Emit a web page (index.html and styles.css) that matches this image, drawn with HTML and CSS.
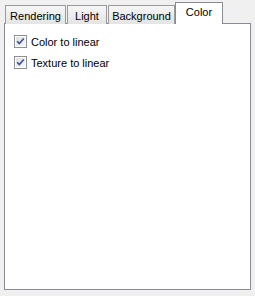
FILE: index.html
```html
<!DOCTYPE html>
<html>
<head>
<meta charset="utf-8">
<link rel="stylesheet" href="styles.css">
</head>
<body>
<div class="window">
  <div class="tabs">
    <div class="tab tab-rendering">Rendering</div>
    <div class="tab tab-light">Light</div>
    <div class="tab tab-background">Background</div>
    <div class="tab tab-color active">Color</div>
  </div>
  <div class="panel">
    <label class="check">
      <svg class="box" width="13" height="13" viewBox="0 0 13 13">
        <defs>
          <linearGradient id="g1" x1="0" y1="0" x2="1" y2="1">
            <stop offset="0" stop-color="#dedede"/>
            <stop offset="1" stop-color="#f8f8f8"/>
          </linearGradient>
        </defs>
        <rect x="0.5" y="0.5" width="12" height="12" fill="#fff" stroke="#8e8f8f"/>
        <rect x="2" y="2" width="9" height="9" fill="url(#g1)"/>
        <path d="M3.2 6.3 L5.3 8.6 L9.8 3.4" fill="none" stroke="#3551a0" stroke-width="1.6"/>
      </svg>
      <span>Color to linear</span>
    </label>
    <label class="check">
      <svg class="box" width="13" height="13" viewBox="0 0 13 13">
        <rect x="0.5" y="0.5" width="12" height="12" fill="#fff" stroke="#8e8f8f"/>
        <rect x="2" y="2" width="9" height="9" fill="url(#g1)"/>
        <path d="M3.2 6.3 L5.3 8.6 L9.8 3.4" fill="none" stroke="#3551a0" stroke-width="1.6"/>
      </svg>
      <span>Texture to linear</span>
    </label>
  </div>
</div>
</body>
</html>
```

FILE: styles.css
```css
html, body {
  margin: 0;
  padding: 0;
  background: #f0f0f0;
}
body {
  width: 255px;
  height: 296px;
  font-family: "Liberation Sans", Arial, sans-serif;
  font-size: 11px;
  color: #000;
}
.window {
  padding: 2px 4px 0 4px;
}
.tabs {
  display: flex;
  align-items: flex-end;
  height: 21px;
  padding-left: 1px;
  gap: 1px;
  position: relative;
  z-index: 2;
}
.tab {
  box-sizing: border-box;
  height: 19px;
  border: 1px solid #9a9a9a;
  border-bottom: none;
  background: linear-gradient(#f6f6f6, #e4e4e4);
  display: flex;
  align-items: center;
  justify-content: center;
  padding-top: 1px;
  margin-bottom: -1px;
}
.tab-rendering { width: 61px; }
.tab-light { width: 40px; }
.tab-background { width: 67px; margin-right: -1px; }
.tab-color { width: 48px; }
.tab.active {
  height: 22px;
  background: #fff;
  border-color: #898c95;
  margin-bottom: -1px;
  align-items: flex-start;
  padding-top: 3px;
}
.panel {
  box-sizing: border-box;
  height: 267px;
  border: 1px solid #898c95;
  background: #fff;
  padding: 11px 0 0 9px;
  display: flex;
  flex-direction: column;
  gap: 8px;
}
.check {
  display: flex;
  align-items: center;
  gap: 4px;
  height: 13px;
}
.box {
  display: block;
  flex: none;
}
```
